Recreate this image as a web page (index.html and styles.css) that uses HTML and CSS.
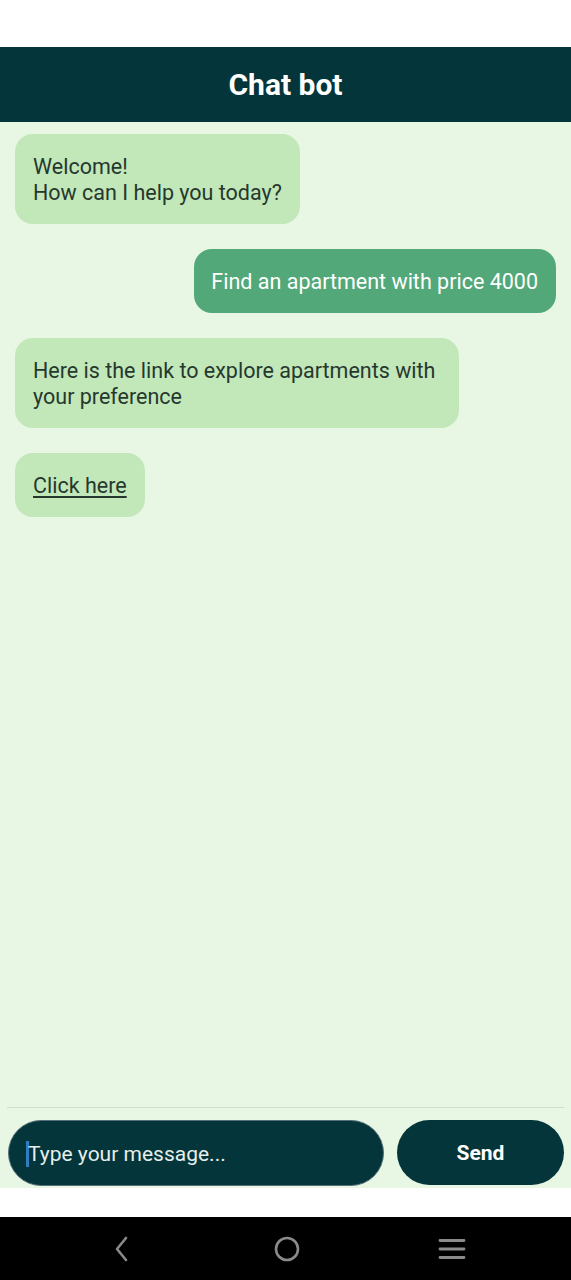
FILE: index.html
```html
<!DOCTYPE html>
<html>
<head>
<meta charset="utf-8">
<link rel="stylesheet" href="styles.css">
</head>
<body>
<div class="screen">
  <div class="status"></div>
  <header class="header"><h1>Chat bot</h1></header>
  <main class="chat">
    <div class="msg bot">Welcome!<br>How can I help you today?</div>
    <div class="msg user">Find an apartment with price 4000</div>
    <div class="msg bot wide">Here is the link to explore apartments with your preference</div>
    <div class="msg bot"><a href="#" class="link">Click here</a></div>
  </main>
  <div class="composer">
    <div class="divider"></div>
    <div class="row">
      <div class="input"><span class="caret"></span><span class="placeholder">Type your message...</span></div>
      <button class="send">Send</button>
    </div>
  </div>
  <div class="spacer"></div>
  <nav class="navbar">
    <svg class="nav-icon" width="30" height="30" viewBox="0 0 30 30"><path d="M19 4 L10 15 L19 26" fill="none" stroke="#8a8a8a" stroke-width="2.6" stroke-linecap="round" stroke-linejoin="round"/></svg>
    <svg class="nav-icon" width="30" height="30" viewBox="0 0 30 30"><circle cx="15" cy="15" r="11" fill="none" stroke="#8a8a8a" stroke-width="2.6"/></svg>
    <svg class="nav-icon" width="30" height="30" viewBox="0 0 30 30"><path d="M3 6.5 H27 M3 15 H27 M3 23.5 H27" fill="none" stroke="#8a8a8a" stroke-width="2.8" stroke-linecap="round"/></svg>
  </nav>
</div>
</body>
</html>
```

FILE: styles.css
```css
* { box-sizing: border-box; }
html, body { margin: 0; padding: 0; }
body { font-family: Roboto, "Noto Sans", "Liberation Sans", sans-serif; background: #ffffff; }
.screen { width: 571px; height: 1280px; display: flex; flex-direction: column; }
.status { height: 47px; flex: none; background: #ffffff; }
.header { height: 75px; flex: none; background: #03353a; display: flex; align-items: center; justify-content: center; }
.header h1 { margin: 0; color: #ffffff; font-size: 30px; font-weight: 700; }
.chat { flex: 1; background: #e8f6e4; padding: 12px 15px; display: flex; flex-direction: column; align-items: flex-start; gap: 25px; }
.msg { font-size: 21.5px; line-height: 26px; padding: 20px 18px 18px; border-radius: 18px; color: #26382e; max-width: 444px; }
.msg.bot { background: #c2e7b9; }
.msg.user { align-self: flex-end; max-width: none; background: #52a878; color: #ffffff; padding: 20px 18px 18px 17px; }
.link { color: #26382e; text-decoration: underline; text-underline-offset: 3px; text-decoration-thickness: 1.5px; }
.composer { flex: none; background: #e8f6e4; padding: 0 7px 2px 8px; }
.divider { height: 1px; background: #d2dbcf; margin-left: -1px; }
.row { display: flex; gap: 13px; padding-top: 12px; }
.input { width: 376px; height: 66px; background: #03353a; border-radius: 33px; display: flex; align-items: center; padding-left: 17px; padding-top: 2px; border: 1px solid #55707a; }
.caret { width: 3px; height: 26px; background: #2f7fc0; margin-right: -1px; }
.placeholder { color: #e6eeec; font-size: 21px; }
.send { flex: 1; height: 65px; background: #03353a; border: none; border-radius: 33px; color: #ffffff; font-family: Roboto, "Noto Sans", sans-serif; font-size: 21px; font-weight: 700; padding-top: 2px; }
.spacer { height: 29px; flex: none; background: #ffffff; }
.navbar { height: 63px; flex: none; background: #000000; display: flex; align-items: center; justify-content: center; gap: 135px; padding-left: 2px; }
.nav-icon { display: block; }
```
